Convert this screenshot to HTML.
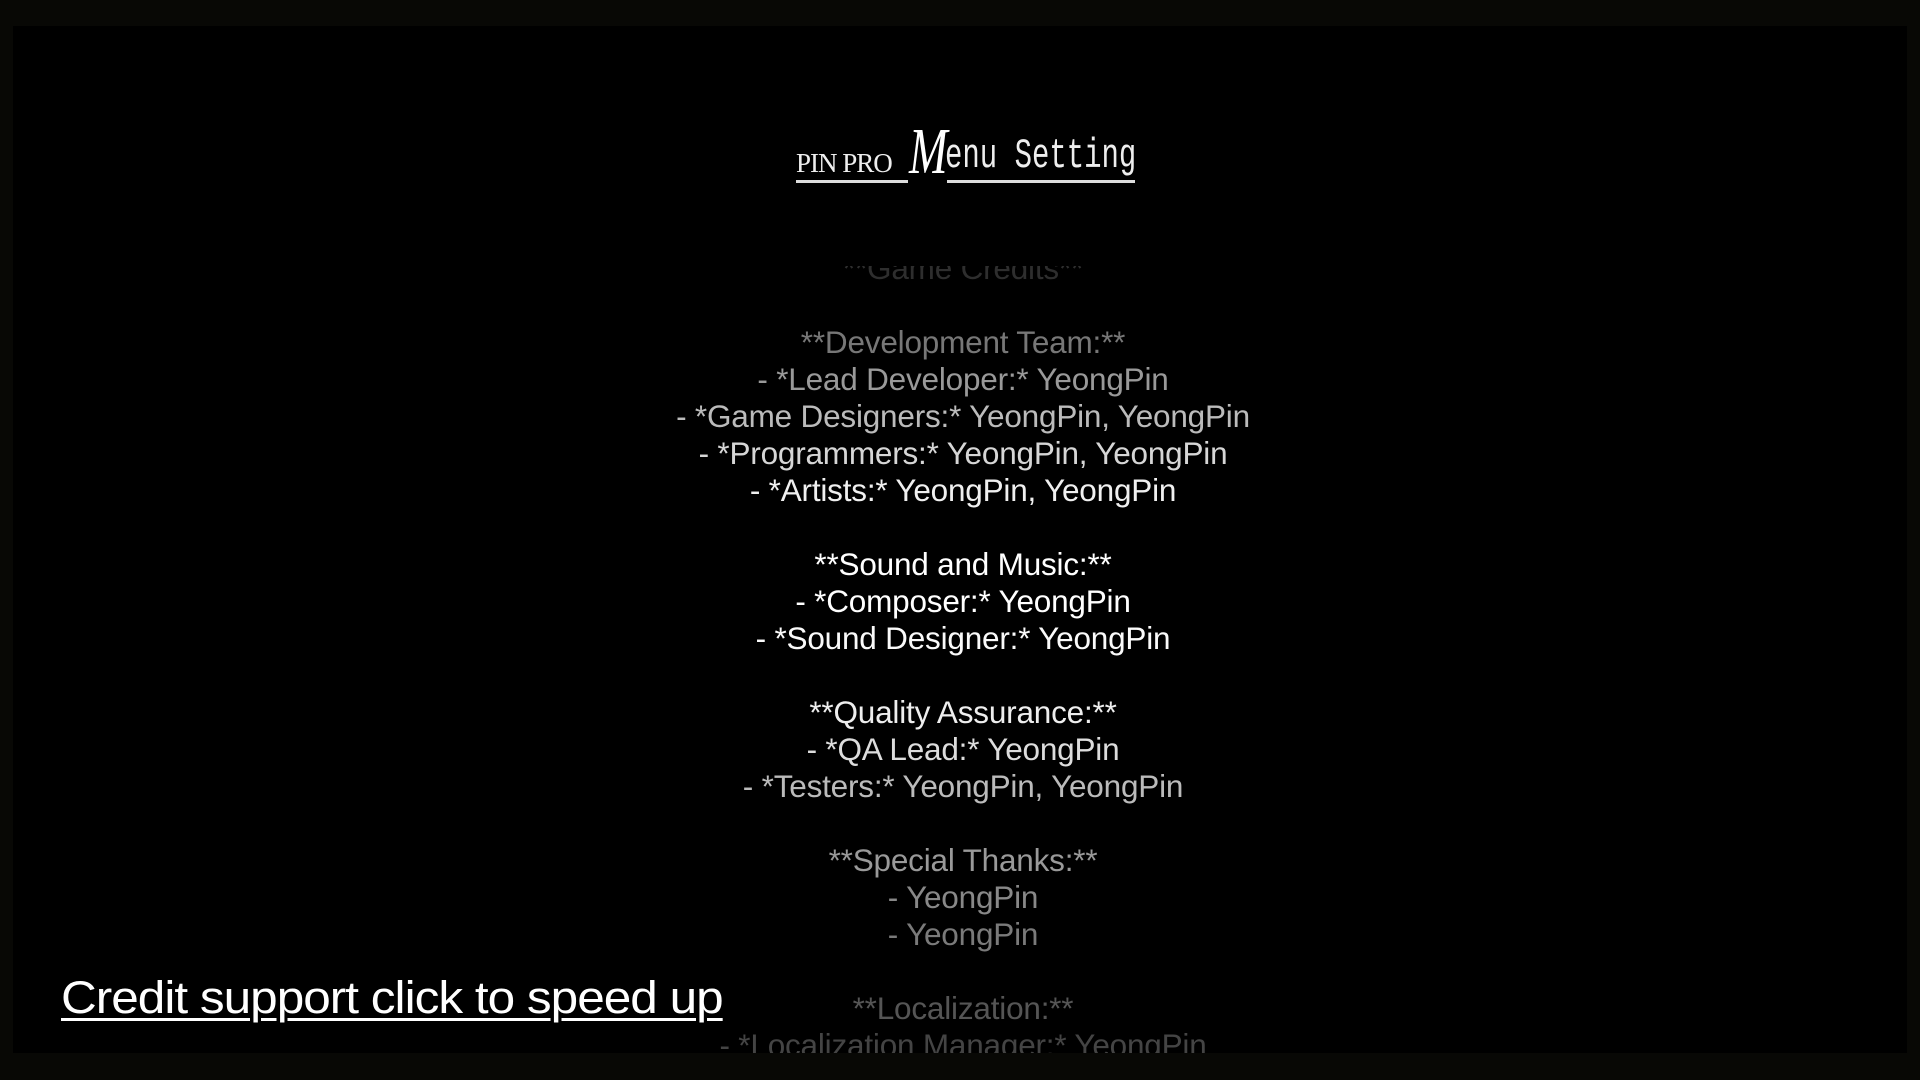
<!DOCTYPE html>
<html><head><meta charset="utf-8"><style>
html,body{margin:0;padding:0;}
body{width:1920px;height:1080px;background:#080805;position:relative;overflow:hidden;font-family:"Liberation Sans",sans-serif;}
#panel{position:absolute;left:13px;top:26px;width:1894px;height:1027px;background:#000;overflow:hidden;}
#title{position:absolute;left:783px;top:94px;width:345px;height:80px;color:#eee;white-space:nowrap;}
#title span{white-space:nowrap;}
#clip{position:absolute;left:3px;top:240px;width:1894px;height:787px;overflow:hidden;}
.ln{position:absolute;left:0;width:1894px;text-align:center;font-size:31.5px;letter-spacing:-0.2px;height:37px;line-height:37px;white-space:nowrap;}
#credit{position:absolute;left:48px;top:946px;color:#fff;font-size:45px;letter-spacing:-0.9px;text-decoration:underline;text-decoration-thickness:3px;text-underline-offset:5px;white-space:nowrap;transform:scaleX(1.1);transform-origin:left;}
</style></head><body>
<div id="panel">
<div id="title">
 <span style="position:absolute;left:0;top:28px;font-family:'Liberation Serif',serif;font-size:27px;letter-spacing:-1px;">PIN PRO</span>
 <span style="position:absolute;left:113px;top:-6px;font-family:'Liberation Serif',serif;font-style:italic;font-size:66px;color:#fff;transform:scaleX(0.7);transform-origin:left;">M</span>
 <span style="position:absolute;left:149px;top:12px;font-family:'Liberation Mono',monospace;font-size:42px;transform:scaleX(0.69);transform-origin:left;">enu Setting</span>
 <div style="position:absolute;left:0;top:60px;width:112px;height:3px;background:#ddd;"></div>
 <div style="position:absolute;left:151px;top:60px;width:188px;height:3px;background:#ddd;"></div>
</div>
<div id="clip">
<div class="ln" style="top:-16px;color:#2e2e2e">**Game Credits**</div>
<div class="ln" style="top:58px;color:#777">**Development Team:**</div>
<div class="ln" style="top:95px;color:#999">- *Lead Developer:* YeongPin</div>
<div class="ln" style="top:132px;color:#bbb">- *Game Designers:* YeongPin, YeongPin</div>
<div class="ln" style="top:169px;color:#d6d6d6">- *Programmers:* YeongPin, YeongPin</div>
<div class="ln" style="top:206px;color:#f0f0f0">- *Artists:* YeongPin, YeongPin</div>
<div class="ln" style="top:280px;color:#fff">**Sound and Music:**</div>
<div class="ln" style="top:317px;color:#fff">- *Composer:* YeongPin</div>
<div class="ln" style="top:354px;color:#fafafa">- *Sound Designer:* YeongPin</div>
<div class="ln" style="top:428px;color:#eee">**Quality Assurance:**</div>
<div class="ln" style="top:465px;color:#ddd">- *QA Lead:* YeongPin</div>
<div class="ln" style="top:502px;color:#bbb">- *Testers:* YeongPin, YeongPin</div>
<div class="ln" style="top:576px;color:#999">**Special Thanks:**</div>
<div class="ln" style="top:613px;color:#888">- YeongPin</div>
<div class="ln" style="top:650px;color:#7a7a7a">- YeongPin</div>
<div class="ln" style="top:724px;color:#555">**Localization:**</div>
<div class="ln" style="top:761px;color:#444">- *Localization Manager:* YeongPin</div>
</div>
<div id="credit">Credit support click to speed up</div>
</div>
</body></html>
